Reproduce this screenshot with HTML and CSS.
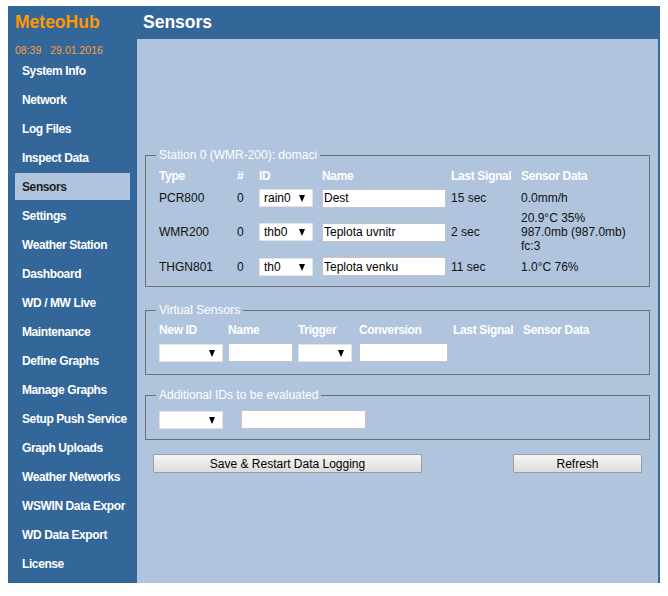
FILE: index.html
```html
<!DOCTYPE html>
<html>
<head>
<meta charset="utf-8">
<title>MeteoHub - Sensors</title>
<link rel="stylesheet" href="styles.css">
</head>
<body>
<div class="page">
  <div class="brand">MeteoHub</div>
  <h1 class="title">Sensors</h1>
  <nav class="side">
    <div class="date"><span>08:39</span><span class="d2">29.01.2016</span></div>
    <a href="#">System Info</a>
    <a href="#">Network</a>
    <a href="#">Log Files</a>
    <a href="#">Inspect Data</a>
    <a href="#" class="active">Sensors</a>
    <a href="#">Settings</a>
    <a href="#">Weather Station</a>
    <a href="#">Dashboard</a>
    <a href="#">WD / MW Live</a>
    <a href="#">Maintenance</a>
    <a href="#">Define Graphs</a>
    <a href="#">Manage Graphs</a>
    <a href="#">Setup Push Service</a>
    <a href="#">Graph Uploads</a>
    <a href="#">Weather Networks</a>
    <a href="#">WSWIN Data Expor</a>
    <a href="#">WD Data Export</a>
    <a href="#">License</a>
  </nav>
  <main class="content">
    <fieldset class="fs fs1">
      <legend>Station 0 (WMR-200): domaci</legend>
      <div class="grid1">
        <div class="hd">Type</div><div class="hd">#</div><div class="hd">ID</div><div class="hd">Name</div><div class="hd">Last Signal</div><div class="hd">Sensor Data</div>

        <div>PCR800</div><div>0</div>
        <div class="sel w54"><select><option>rain0</option></select></div>
        <div><input class="txt w124" type="text" value="Dest"></div>
        <div>15 sec</div><div>0.0mm/h</div>

        <div>WMR200</div><div>0</div>
        <div class="sel w54"><select><option>thb0</option></select></div>
        <div><input class="txt w124" type="text" value="Teplota uvnitr"></div>
        <div>2 sec</div><div class="multi">20.9°C 35%<br>987.0mb (987.0mb)<br>fc:3</div>

        <div>THGN801</div><div>0</div>
        <div class="sel w54"><select><option>th0</option></select></div>
        <div><input class="txt w124" type="text" value="Teplota venku"></div>
        <div>11 sec</div><div>1.0°C 76%</div>
      </div>
    </fieldset>

    <fieldset class="fs fs2">
      <legend>Virtual Sensors</legend>
      <div class="grid2">
        <div class="hd">New ID</div><div class="hd">Name</div><div class="hd">Trigger</div><div class="hd">Conversion</div><div class="hd">Last Signal</div><div class="hd">Sensor Data</div>
        <div class="sel w64"><select><option></option></select></div>
        <div><input class="txt w65" type="text"></div>
        <div class="sel w54"><select><option></option></select></div>
        <div><input class="txt w89" type="text"></div>
        <div></div><div></div>
      </div>
    </fieldset>

    <fieldset class="fs fs3">
      <legend>Additional IDs to be evaluated</legend>
      <div class="row3">
        <div class="sel w64"><select><option></option></select></div>
        <input class="txt w125" type="text">
      </div>
    </fieldset>

    <div class="buttons">
      <button class="btn save" type="button">Save &amp; Restart Data Logging</button>
      <button class="btn refresh" type="button">Refresh</button>
    </div>
  </main>
</div>
</body>
</html>
```

FILE: styles.css
```css
body {
  margin: 6px 8px;
  font-family: "Liberation Sans", Arial, sans-serif;
  font-size: 12px;
  background: #fff;
}

.page {
  display: grid;
  grid-template-columns: 129px 521px;
  grid-template-rows: 33px 544px;
  background: #336699;
}

.brand {
  color: #ff9900;
  font-weight: bold;
  font-size: 17.5px;
  line-height: 33px;
  padding-left: 7px;
}

.title {
  margin: 0;
  color: #fff;
  font-size: 17.5px;
  line-height: 33px;
  padding-left: 6px;
}

.side {
  padding-top: 4px;
}

.date {
  color: #f7a03a;
  font-size: 10.5px;
  line-height: 14px;
  padding-left: 7px;
}

.date .d2 {
  margin-left: 9px;
}

.side a {
  display: block;
  width: 108px;
  height: 26px;
  line-height: 26px;
  padding-top: 1px;
  margin: 0 0 2px 7px;
  padding-left: 7px;
  color: #fff;
  font-weight: bold;
  font-size: 12px;
  letter-spacing: -0.4px;
  text-decoration: none;
  white-space: nowrap;
  overflow: hidden;
}

.side a.active {
  background: #b0c4de;
  color: #222;
}

.content {
  background: #b0c4de;
  padding: 109px 8px 0;
}

.fs {
  margin: 0;
  border: 1px solid #6f6f6f;
  padding: 7px 12px 10px 13px;
  min-width: 0;
}

.fs legend {
  color: #fff;
  font-size: 12px;
  line-height: 14px;
  padding: 0 3px;
  margin-left: -3px;
}

.hd {
  color: #fff;
  font-weight: bold;
  font-size: 12px;
  letter-spacing: -0.35px;
  line-height: 14px;
  white-space: nowrap;
}

.grid1 {
  display: grid;
  grid-template-columns: 78px 22px 63px 129px 70px auto;
  grid-template-rows: 16px 20px 42px 21px;
  row-gap: 3px;
  align-items: center;
  color: #111;
}

.grid1 .hd {
  align-self: start;
}

.multi {
  line-height: 14px;
}

.fs1 {
  padding-bottom: 9px;
}

.fs2 {
  margin-top: 16px;
  padding-top: 6px;
  padding-bottom: 12px;
}

.grid2 {
  display: grid;
  grid-template-columns: 69px 70px 61px 94px 70px auto;
  grid-template-rows: 14px 19px;
  row-gap: 6px;
  align-items: center;
}

.fs3 {
  margin-top: 13px;
  padding-top: 8px;
  padding-bottom: 10px;
}

.row3 {
  display: flex;
  align-items: center;
  gap: 18px;
  height: 19px;
}

.sel {
  position: relative;
  height: 18px;
}

.sel select {
  -webkit-appearance: none;
  appearance: none;
  width: 100%;
  height: 18px;
  box-sizing: border-box;
  border: 1px solid #e2e2e2;
  border-radius: 0;
  background: #fff;
  font-family: "Liberation Sans", Arial, sans-serif;
  font-size: 12px;
  color: #000;
  padding: 0 0 0 4px;
  margin: 0;
  outline: none;
}

.sel::after {
  content: "";
  position: absolute;
  right: 8px;
  top: 6px;
  border-left: 3.5px solid transparent;
  border-right: 3.5px solid transparent;
  border-top: 7px solid #000;
  pointer-events: none;
}

.w54 { width: 54px; }
.w64 { width: 64px; }

.txt {
  height: 19px;
  box-sizing: border-box;
  border: 1px solid #c4c4c4;
  border-radius: 0;
  background: #fff;
  font-family: "Liberation Sans", Arial, sans-serif;
  font-size: 12px;
  color: #000;
  padding: 0 0 0 1px;
  margin: 0;
  display: block;
}

.w124 { width: 124px; }
.w65 { width: 65px; }
.w89 { width: 89px; }
.w125 { width: 125px; }

.buttons {
  display: flex;
  justify-content: space-between;
  padding: 0 8px;
  margin-top: 14px;
}

.btn {
  height: 19px;
  box-sizing: border-box;
  border: 1px solid #9d9d9d;
  border-radius: 1px;
  background: linear-gradient(#f6f6f6, #dcdcdc);
  font-family: "Liberation Sans", Arial, sans-serif;
  font-size: 12px;
  color: #000;
  padding: 0;
  margin: 0;
}

.save { width: 269px; }
.refresh { width: 129px; }
```
